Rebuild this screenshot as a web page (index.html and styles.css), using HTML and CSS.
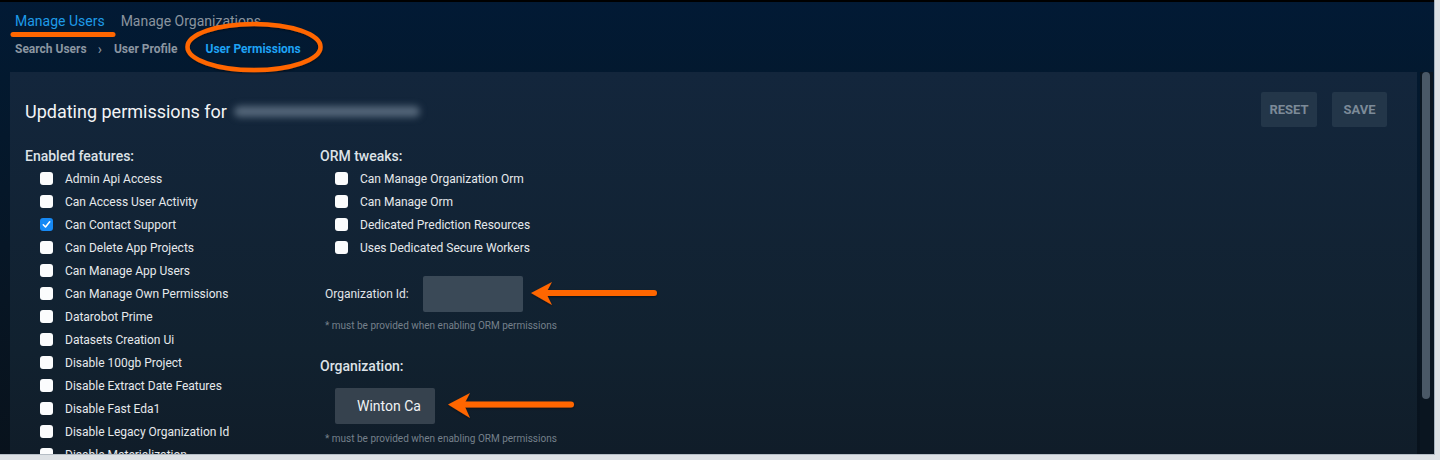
FILE: index.html
```html
<!DOCTYPE html>
<html>
<head>
<meta charset="utf-8">
<link rel="stylesheet" href="styles.css">
</head>
<body>
<div class="app">
  <div class="topline"></div>
  <header class="header">
    <nav class="tabs">
      <span class="tab active">Manage Users</span>
      <span class="tab">Manage Organizations</span>
    </nav>
    <nav class="crumbs">
      <span class="crumb">Search Users</span>
      <span class="chev">›</span>
      <span class="crumb">User Profile</span>
      <span class="crumb current">User Permissions</span>
    </nav>
  </header>
  <div class="main">
    <section class="panel">
      <div class="title-row">
        <h1 class="title">Updating permissions for <span class="blurred"></span></h1>
        <div class="actions">
          <button class="btn">RESET</button>
          <button class="btn">SAVE</button>
        </div>
      </div>
      <div class="cols">
        <div class="col col-features">
          <h2 class="heading">Enabled features:</h2>
          <ul class="checks">
            <li class="check"><span class="box"></span>Admin Api Access</li>
            <li class="check"><span class="box"></span>Can Access User Activity</li>
            <li class="check"><span class="box checked"><svg viewBox="0 0 13 13" width="13" height="13"><path d="M3.3 6.8 L5.5 9 L9.7 3.8" fill="none" stroke="#fff" stroke-width="1.6" stroke-linecap="round" stroke-linejoin="round"/></svg></span>Can Contact Support</li>
            <li class="check"><span class="box"></span>Can Delete App Projects</li>
            <li class="check"><span class="box"></span>Can Manage App Users</li>
            <li class="check"><span class="box"></span>Can Manage Own Permissions</li>
            <li class="check"><span class="box"></span>Datarobot Prime</li>
            <li class="check"><span class="box"></span>Datasets Creation Ui</li>
            <li class="check"><span class="box"></span>Disable 100gb Project</li>
            <li class="check"><span class="box"></span>Disable Extract Date Features</li>
            <li class="check"><span class="box"></span>Disable Fast Eda1</li>
            <li class="check"><span class="box"></span>Disable Legacy Organization Id</li>
            <li class="check"><span class="box"></span>Disable Materialization</li>
          </ul>
        </div>
        <div class="col col-orm">
          <h2 class="heading">ORM tweaks:</h2>
          <ul class="checks">
            <li class="check"><span class="box"></span>Can Manage Organization Orm</li>
            <li class="check"><span class="box"></span>Can Manage Orm</li>
            <li class="check"><span class="box"></span>Dedicated Prediction Resources</li>
            <li class="check"><span class="box"></span>Uses Dedicated Secure Workers</li>
          </ul>
          <div class="field-row">
            <label class="field-label">Organization Id:</label>
            <div class="input"></div>
          </div>
          <p class="note">* must be provided when enabling ORM permissions</p>
          <h2 class="heading org-heading">Organization:</h2>
          <div class="org-row">
            <button class="org-btn">Winton Ca</button>
          </div>
          <p class="note note-last">* must be provided when enabling ORM permissions</p>
        </div>
      </div>
    </section>
    <div class="scroll-track"><div class="scroll-thumb"></div></div>
  </div>

  <svg class="annot" width="1440" height="460" viewBox="0 0 1440 460">
    <defs>
      <filter id="sh" x="-10%" y="-50%" width="120%" height="200%">
        <feDropShadow dx="0" dy="1" stdDeviation="1" flood-color="#000" flood-opacity="0.5"/>
      </filter>
    </defs>
    <line x1="13" y1="34.5" x2="113" y2="34.5" stroke="#ff6600" stroke-width="5" stroke-linecap="round"/>
    <ellipse cx="254" cy="47" rx="66.5" ry="23" fill="none" stroke="#ff6600" stroke-width="4.5" filter="url(#sh)"/>
    <g filter="url(#sh)" fill="#ff6600">
      <line x1="545" y1="293" x2="654" y2="293" stroke="#ff6600" stroke-width="6" stroke-linecap="round"/>
      <path d="M531 293 L552 282 L546 293 L552 305 Z"/>
      <line x1="463" y1="404.5" x2="571" y2="404.5" stroke="#ff6600" stroke-width="6" stroke-linecap="round"/>
      <path d="M448 404.5 L470 393 L464 404.5 L470 418 Z"/>
    </g>
  </svg>
</div>
</body>
</html>
```

FILE: styles.css
```css
* { box-sizing: border-box; }
html, body { margin: 0; padding: 0; }
body {
  background: #dde1e5;
  font-family: Roboto, "Liberation Sans", Arial, sans-serif;
  width: 1440px;
  height: 460px;
  overflow: hidden;
}
.app {
  position: relative;
  width: 1435px;
  height: 455px;
  overflow: hidden;
  border-right: 1px solid #a9b4bf;
  border-bottom: 1px solid #b5bdc5;
  background: linear-gradient(180deg, #021a35 0px, #03192f 80px, #071523 300px, #08121c 455px);
}
.topline { height: 2px; background: #000; }
.header { padding: 0 0 0 15px; }
.tabs {
  display: flex;
  gap: 16px;
  height: 33px;
  padding-top: 9px;
  font-size: 14px;
  line-height: 20px;
}
.tab { color: #8a949f; }
.tab.active { color: #1e9be8; }
.crumbs {
  display: flex;
  align-items: center;
  height: 26px;
  font-size: 12px;
  font-weight: 700;
  color: #8b96a1;
  padding-top: 1px;
}
.chev { margin: 0 12px 0 11px; font-weight: 400; font-size: 14px; }
.crumb.current { color: #1ea3f5; margin-left: 28px; }
.main {
  display: flex;
  padding-left: 10px;
  margin-top: 11px;
  height: 400px;
}
.panel {
  width: 1407px;
  height: 400px;
  background: linear-gradient(180deg, #13263c 0%, #11212f 70%, #101c28 100%);
  padding: 20px 30px 0 15px;
}
.title-row {
  display: flex;
  align-items: center;
  justify-content: space-between;
  height: 35px;
}
.title {
  margin: 0;
  padding-top: 3px;
  font-size: 18px;
  font-weight: 400;
  color: #f2f4f6;
  display: flex;
  align-items: center;
}
.blurred {
  display: inline-block;
  width: 186px;
  height: 11px;
  margin-left: 7px;
  background: #55677a;
  border-radius: 6px;
  filter: blur(3.5px);
}
.actions { display: flex; gap: 15px; }
.btn {
  border: 0;
  background: #233649;
  color: #7c8a98;
  font-family: Roboto, "Liberation Sans", Arial, sans-serif;
  font-size: 13px;
  font-weight: 700;
  height: 35px;
  border-radius: 2px;
  padding: 0;
}
.btn:first-child { width: 56px; }
.btn:last-child { width: 55px; }
.cols { display: flex; margin-top: 21px; }
.col-features { width: 295px; }
.heading {
  margin: 0;
  font-size: 14px;
  font-weight: 500;
  color: #dde2e7;
  line-height: 17px;
}
.checks {
  list-style: none;
  margin: 2px 0 0;
  padding: 0 0 0 15px;
}
.check {
  display: flex;
  align-items: center;
  height: 23px;
  font-size: 12px;
  color: #e6e9ec;
}
.box {
  width: 13px;
  height: 13px;
  border-radius: 3px;
  background: #fbfcfd;
  margin-right: 12px;
  flex: none;
  display: flex;
}
.box.checked { background: #1689f5; }
.field-row {
  display: flex;
  align-items: center;
  margin-top: 17px;
  padding-left: 5px;
}
.field-label { font-size: 12px; color: #e1e5e9; width: 98px; }
.input {
  width: 100px;
  height: 36px;
  background: #3a4957;
  border-radius: 2px;
}
.note {
  margin: 8px 0 0 5px;
  font-size: 10px;
  line-height: 12px;
  color: #75808b;
}
.note-last { margin-top: 9px; }
.org-heading { margin-top: 26px; }
.org-row { padding-left: 15px; margin-top: 13px; }
.org-btn {
  width: 100px;
  height: 36px;
  border: 0;
  border-radius: 2px;
  background: #36424e;
  color: #f0f2f4;
  font-family: Roboto, "Liberation Sans", Arial, sans-serif;
  font-size: 14px;
  text-align: left;
  padding-left: 22px;
}
.scroll-track {
  width: 13px;
  margin-left: 3px;
  height: 400px;
  background: #0a1520;
  padding: 0 2px 0 2px;
}
.scroll-thumb {
  width: 8px;
  height: 327px;
  background: #4a5866;
  border-radius: 4px;
}
.annot {
  position: absolute;
  left: 0;
  top: 0;
  pointer-events: none;
}
```
